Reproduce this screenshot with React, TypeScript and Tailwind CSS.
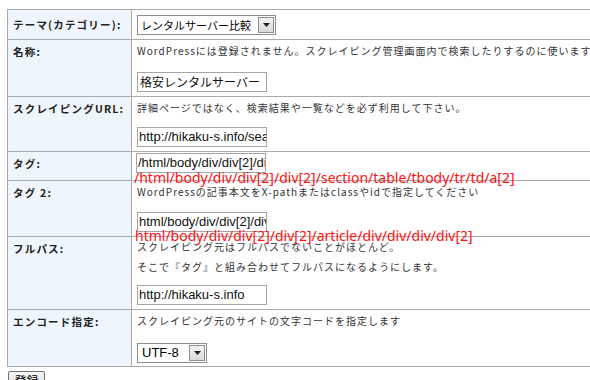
import React from "react";

const jp = { fontFamily: '"Noto Sans CJK JP", "Noto Sans", sans-serif' };
const ar = { fontFamily: '"Liberation Sans", "Noto Sans CJK JP", sans-serif' };
const red = { fontFamily: '"Noto Sans", "Noto Sans CJK JP", sans-serif' };

function Arrow() {
  return (
    <span className="flex h-[16px] w-[16px] shrink-0 items-center justify-center border border-[#8e8e8e] bg-gradient-to-b from-[#f4f4f4] to-[#d8d8d8]">
      <svg width="7" height="4" viewBox="0 0 7 4">
        <path d="M0 0h7L3.5 4z" fill="#222" />
      </svg>
    </span>
  );
}

function Label({ children, h }: { children: React.ReactNode; h: string }) {
  return (
    <div
      className={`${h} border-b border-r border-[#aaaaaa] bg-[#eef5fc] pl-[5px] pt-[2px] text-[10.5px] font-bold leading-[20px] tracking-[1.2px] text-[#222]`}
      style={jp}
    >
      {children}
    </div>
  );
}

function Cell({ children, h }: { children: React.ReactNode; h: string }) {
  return (
    <div
      className={`${h} flex flex-col items-start border-b border-r border-[#aaaaaa] pl-[5px] pt-[1px] text-[10px] leading-[20px] tracking-[1px] text-[#333]`}
      style={jp}
    >
      {children}
    </div>
  );
}

function Input({ value, mt, jpText }: { value: string; mt: string; jpText?: boolean }) {
  return (
    <div
      className={`${mt} ${jpText ? "text-[12px] pl-[2px]" : "text-[13px] pl-[1px]"} h-[20px] w-[130px] overflow-hidden whitespace-nowrap border border-[#a5a5a5] bg-white leading-[18px] tracking-normal text-[#111]`}
      style={jpText ? jp : ar}
    >
      {value}
    </div>
  );
}

function Red({ children, mt }: { children: React.ReactNode; mt: string }) {
  return (
    <div className={`${mt} relative -ml-[2px] h-0 w-full overflow-visible`}>
      <div
        className="whitespace-nowrap text-[14px] leading-[16px] tracking-normal text-[#ff1111]"
        style={red}
      >
        {children}
      </div>
    </div>
  );
}

export default function App() {
  return (
    <div className="h-[380px] w-[590px] overflow-hidden bg-white pl-[7px] pt-[9px]">
      <div className="grid w-[700px] grid-cols-[124px_576px] border-l border-t border-[#aaaaaa]">
        <Label h="h-[30px] !pt-[0px] flex items-center">テーマ(カテゴリー):</Label>
        <Cell h="h-[30px] !pt-[5px]">
          <div
            className="flex h-[20px] w-[139px] items-center justify-between whitespace-nowrap border border-[#8e8e8e] bg-white pl-[3px] pr-[1px] text-[11px] leading-[18px] tracking-normal text-black"
            style={jp}
          >
            <span>レンタルサーバー比較</span>
            <Arrow />
          </div>
        </Cell>

        <Label h="h-[57px]">名称:</Label>
        <Cell h="h-[57px]">
          <div className="whitespace-nowrap">
            WordPressには登録されません。スクレイピング管理画面内で検索したりするのに使います。
          </div>
          <Input value="格安レンタルサーバー" mt="mt-[11px]" jpText />
        </Cell>

        <Label h="h-[55px]">スクレイピングURL:</Label>
        <Cell h="h-[55px]">
          <div className="whitespace-nowrap">詳細ページではなく、検索結果や一覧などを必ず利用して下さい。</div>
          <Input value="http://hikaku-s.info/search/" mt="mt-[9px]" />
        </Cell>

        <Label h="h-[29px]">タグ:</Label>
        <Cell h="h-[29px] !pl-[4px]">
          <Input value="/html/body/div/div[2]/div[2]/section" mt="mt-0" />
          <Red mt="-mt-[3px]">/html/body/div/div[2]/div[2]/section/table/tbody/tr/td/a[2]</Red>
        </Cell>

        <Label h="h-[56px]">タグ 2:</Label>
        <Cell h="h-[56px]">
          <div className="whitespace-nowrap">WordPressの記事本文をX-pathまたはclassやidで指定してください</div>
          <Input value="html/body/div/div[2]/div[2]/article" mt="mt-[10px]" />
          <Red mt="-mt-[4px]">html/body/div/div[2]/div[2]/article/div/div/div/div[2]</Red>
        </Cell>

        <Label h="h-[73px]">フルパス:</Label>
        <Cell h="h-[73px] !pt-0">
          <div className="whitespace-nowrap">スクレイピング元はフルパスでないことがほとんど。</div>
          <div className="whitespace-nowrap">そこで『タグ』と組み合わせてフルパスになるようにします。</div>
          <Input value="http://hikaku-s.info" mt="mt-[8px]" />
        </Cell>

        <Label h="h-[57px]">エンコード指定:</Label>
        <Cell h="h-[57px]">
          <div className="whitespace-nowrap">スクレイピング元のサイトの文字コードを指定します</div>
          <div
            className="mt-[12px] flex h-[20px] w-[70px] items-center justify-between border border-[#8e8e8e] bg-white pl-[4px] pr-[1px] text-[13px] leading-[18px] tracking-normal text-black"
            style={ar}
          >
            <span>UTF-8</span>
            <Arrow />
          </div>
        </Cell>
      </div>
      <div className="ml-[1px] mt-[1px]">
        <button
          className="h-[20px] w-[37px] rounded-[2px] border border-[#707070] bg-gradient-to-b from-[#f6f6f6] to-[#dcdcdc] text-[12px] leading-[16px] text-black"
          style={jp}
        >
          登録
        </button>
      </div>
    </div>
  );
}
